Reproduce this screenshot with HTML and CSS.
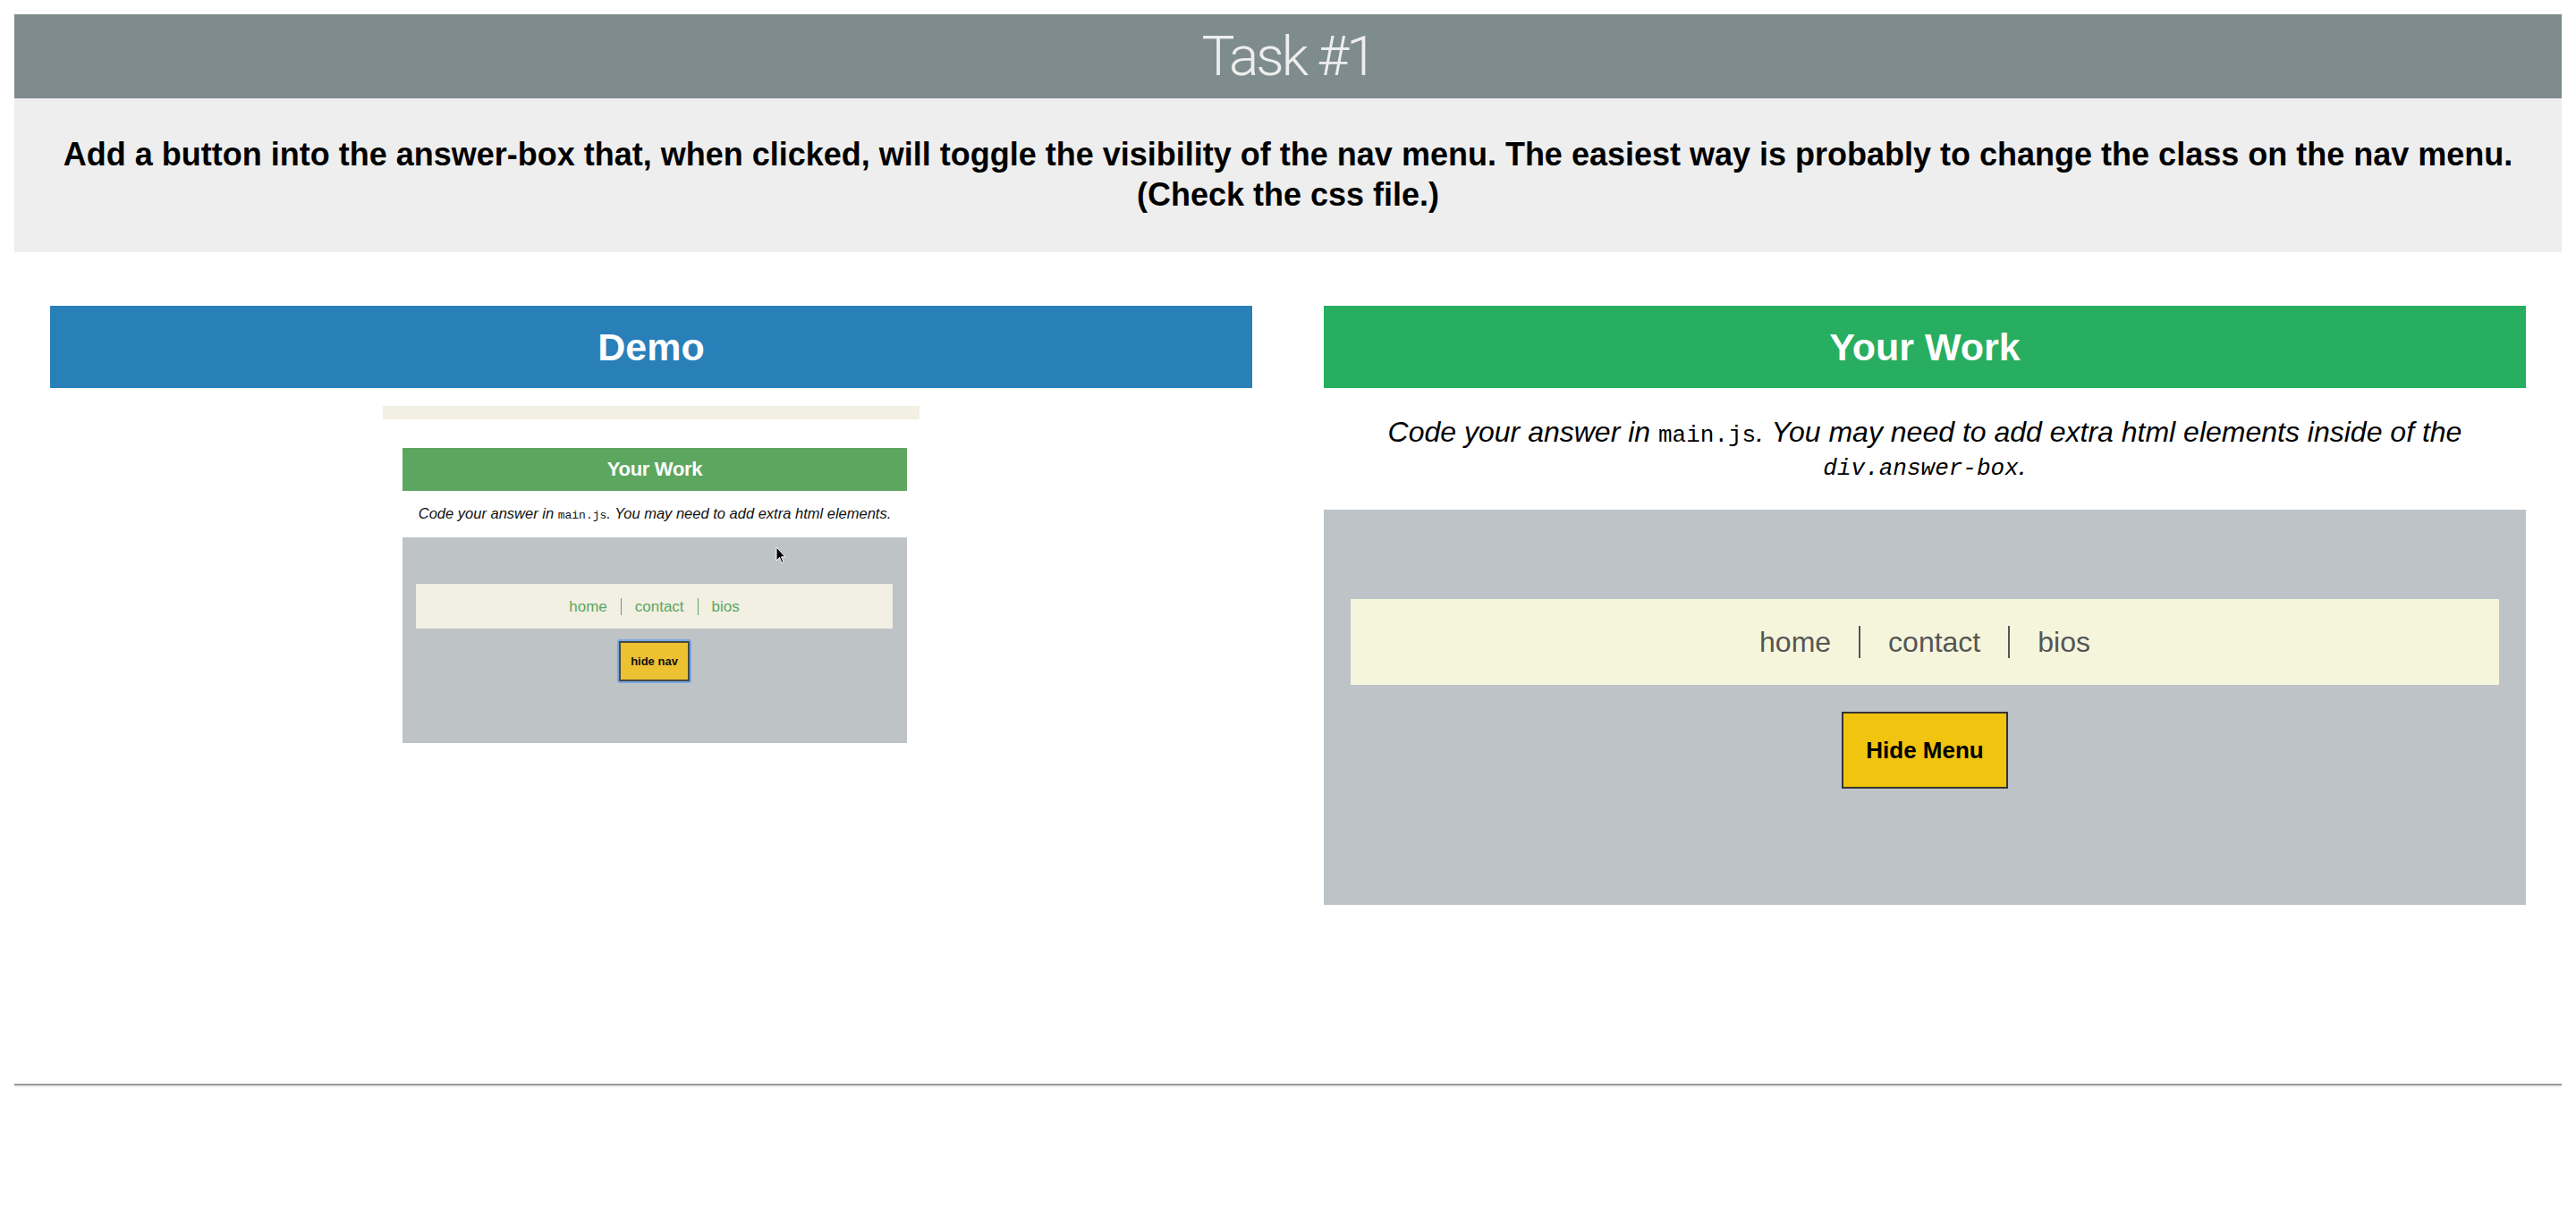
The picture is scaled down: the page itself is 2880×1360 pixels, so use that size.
FILE: index.html
```html
<!DOCTYPE html>
<html lang="en">
<head>
<meta charset="utf-8">
<title>Task #1</title>
<link rel="stylesheet" href="styles.css">
</head>
<body>
<header class="task-header"><h1 class="task-title">Task #1</h1></header>
<div class="task-desc">
  <p>Add a button into the answer-box that, when clicked, will toggle the visibility of the nav menu. The easiest way is probably to change the class on the nav menu. (Check the css file.)</p>
</div>
<main class="columns">
  <section class="col">
    <h2 class="bar bar-demo">Demo</h2>
    <div class="demo-shot">
      <div class="demo-strip"></div>
      <div class="demo-inner">
        <div class="demo-bar">Your Work</div>
        <p class="demo-text">Code your answer in <code>main.js</code>. You may need to add extra html elements.</p>
        <div class="demo-box">
          <ul class="demo-nav">
            <li>home</li>
            <li>contact</li>
            <li>bios</li>
          </ul>
          <span class="demo-btn-ring"><span class="demo-btn">hide nav</span></span>
        </div>
      </div>
      <svg class="demo-cursor" width="12" height="20" viewBox="0 0 12 20"><path d="M1 1 L1 16 L4.5 12.5 L7 18.5 L9 17.6 L6.6 11.8 L11 11.8 Z" fill="#000" stroke="#fff" stroke-width="1"/></svg>
    </div>
  </section>
  <section class="col">
    <h2 class="bar bar-work">Your Work</h2>
    <p class="instructions">Code your answer in <code>main.js</code>. You may need to add extra html elements inside of the <code class="em">div.answer-box</code>.</p>
    <div class="answer-box">
      <nav class="menu">
        <ul class="menu-list">
          <li class="menu-item">home</li>
          <li class="menu-item">contact</li>
          <li class="menu-item">bios</li>
        </ul>
      </nav>
      <button class="toggle-btn" type="button">Hide Menu</button>
    </div>
  </section>
</main>
<hr class="rule">
</body>
</html>
```
FILE: styles.css
```css
html, body {
  background: #ffffff;
}
body {
  margin: 16px;
  font-family: "Liberation Sans", Arial, Helvetica, sans-serif;
  color: #000;
}

.task-header {
  background: #7f8c8d;
  height: 94px;
  display: flex;
  align-items: center;
  justify-content: center;
}
.task-title {
  margin: 0;
  font-family: Roboto, "Liberation Sans", sans-serif;
  font-weight: 300;
  font-size: 62px;
  line-height: 94px;
  color: #eeeeee;
  letter-spacing: -3px;
}

.task-desc {
  background: #eeeeee;
  padding: 40px 40px 42px;
}
.task-desc p {
  margin: 0;
  text-align: center;
  font-weight: bold;
  font-size: 36px;
  line-height: 45px;
}

.columns {
  display: grid;
  grid-template-columns: 1fr 1fr;
  margin-top: 60px;
  padding-bottom: 200px;
}
.col {
  padding: 0 40px;
  min-width: 0;
}

.bar {
  margin: 0;
  height: 92px;
  line-height: 92px;
  text-align: center;
  color: #fff;
  font-size: 43px;
  font-weight: bold;
}
.bar-demo { background: #2980b9; }
.bar-work { background: #27ae60; }

/* demo screenshot */
.demo-shot {
  position: relative;
  width: 600px;
  margin: 20px auto 0;
  height: 390px;
}
.demo-strip {
  height: 15px;
  background: #f2efe3;
}
.demo-inner {
  margin: 32px 14px 0 22px;
}
.demo-bar {
  height: 48px;
  line-height: 48px;
  background: #5ca660;
  color: #fff;
  font-weight: bold;
  font-size: 22px;
  text-align: center;
  letter-spacing: -0.3px;
}
.demo-text {
  margin: 0;
  height: 52px;
  line-height: 30px;
  padding-top: 10px;
  box-sizing: border-box;
  text-align: center;
  font-style: italic;
  font-size: 16.5px;
  color: #111;
  white-space: nowrap;
}
.demo-text code {
  font-family: "Liberation Mono", monospace;
  font-style: normal;
  font-size: 13px;
  line-height: 1;
}
.demo-box {
  background: #bec3c6;
  height: 230px;
  padding: 52px 16px 0 15px;
  box-sizing: border-box;
  text-align: center;
}
.demo-nav {
  list-style: none;
  margin: 0;
  padding: 0;
  height: 50px;
  background: #f2efe3;
  display: flex;
  justify-content: center;
  align-items: center;
  color: #5ca660;
  font-size: 17px;
}
.demo-nav li {
  padding: 0 15px;
  line-height: 19px;
}
.demo-nav li + li {
  border-left: 1px solid #5ca660;
}
.demo-btn-ring {
  display: inline-block;
  margin-top: 12px;
  padding: 2px;
  border-radius: 3px;
  background: #78a6e2;
}
.demo-btn {
  display: block;
  width: 75px;
  height: 41px;
  line-height: 41px;
  border: 2px solid #4a4a40;
  background: #ecc132;
  font-weight: bold;
  font-size: 13px;
  color: #111;
}
.demo-cursor {
  position: absolute;
  left: 439px;
  top: 157px;
}

/* your work */
.instructions {
  margin: 31px 0 31px;
  text-align: center;
  font-style: italic;
  font-size: 32px;
  line-height: 37px;
}
.instructions code {
  font-family: "Liberation Mono", "Courier New", monospace;
  font-size: 26px;
  font-style: normal;
  line-height: 1;
}
.instructions code.em {
  font-style: italic;
}

.answer-box {
  background: #bdc3c7;
  padding: 100px 30px 130px;
  text-align: center;
}
.menu {
  background: #f5f5dc;
  padding: 30px 0;
}
.menu-list {
  list-style: none;
  margin: 0;
  padding: 0;
  display: flex;
  justify-content: center;
}
.menu-item {
  padding: 0 31px;
  font-size: 32px;
  line-height: 36px;
  color: #555555;
}
.menu-item + .menu-item {
  border-left: 2px solid #555555;
}
.toggle-btn {
  margin-top: 30px;
  background: #f1c40f;
  border: 2px solid #333333;
  border-radius: 0;
  padding: 26px 25px;
  font-family: "Liberation Sans", Arial, sans-serif;
  font-weight: bold;
  font-size: 26px;
  line-height: 30px;
  color: #000;
}

.rule {
  margin: 0;
  height: 0;
  border: 0;
  border-top: 2px solid #999999;
  border-bottom: 2px solid #eeeeee;
}
```
